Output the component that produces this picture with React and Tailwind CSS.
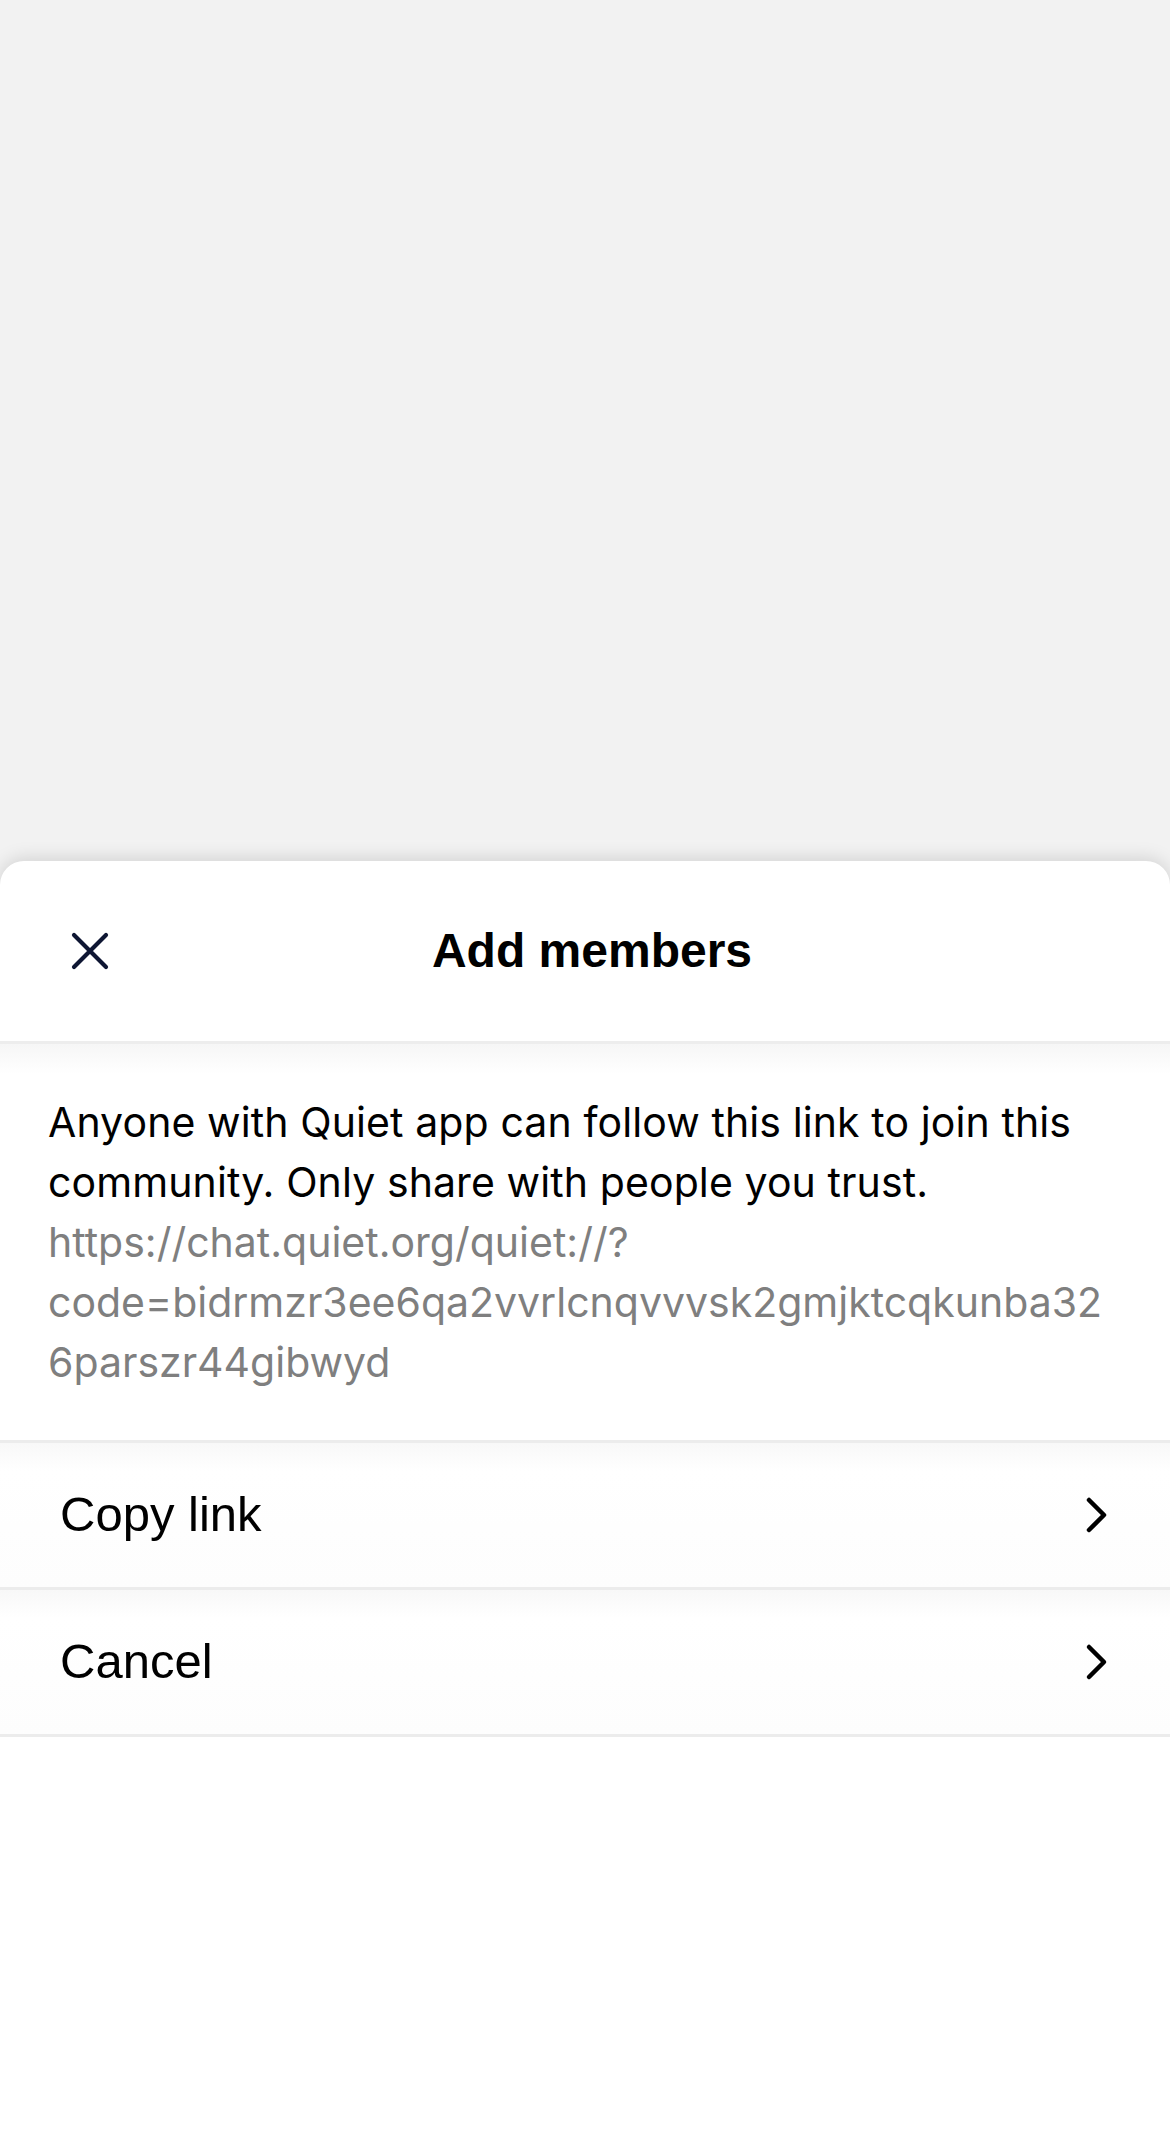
import React from "react";

function CloseIcon() {
  return (
    <svg width="40" height="40" viewBox="0 0 40 40" fill="none">
      <path d="M4 4 L36 36 M36 4 L4 36" stroke="#0e1633" strokeWidth="4.2" strokeLinecap="round" />
    </svg>
  );
}

function Chevron() {
  return (
    <svg width="28" height="40" viewBox="0 0 28 40" fill="none">
      <path d="M6 5 L21 20 L6 35" stroke="#000" strokeWidth="4.5" strokeLinecap="round" strokeLinejoin="round" />
    </svg>
  );
}

function Row({ label }) {
  return (
    <>
      <div className="h-[3px] bg-[#ececec]" />
      <div className="h-[144px] flex items-center justify-between pl-[60px] pr-[59px] bg-[linear-gradient(to_bottom,#f8f8f8,#ffffff_28px,#fdfdfd)]">
        <span className="text-[49px] text-black font-['Liberation_Sans',Arial,sans-serif]">{label}</span>
        <Chevron />
      </div>
    </>
  );
}

export default function App() {
  return (
    <div className="min-h-[2154px] bg-[#f2f2f2] flex flex-col overflow-hidden">
      <div className="h-[861px] shrink-0" />
      <div className="flex-1 bg-white rounded-t-[24px] shadow-[0_-3px_18px_rgba(0,0,0,0.13)] flex flex-col">
        <div className="h-[180px] grid grid-cols-[1fr_auto_1fr] items-center">
          <div className="pl-[70px] flex items-center">
            <CloseIcon />
          </div>
          <h1 className="text-[48px] font-bold text-black font-['Liberation_Sans',Arial,sans-serif] translate-x-[7px]">
            Add members
          </h1>
          <div />
        </div>
        <div className="h-[3px] bg-[#ededed]" />
        <div className="pl-[48px] pr-[36px] py-[48px] bg-[linear-gradient(to_bottom,#f6f6f6,#ffffff_30px)] font-['Inter','Noto_Sans',sans-serif] text-[41px] leading-[60px]">
          <p className="text-black tracking-[0.1px]">
            Anyone with Quiet app can follow this link to join this
            <br />
            community. Only share with people you trust.
          </p>
          <p className="text-[#7f7f7f]">
            https://chat.quiet.org/quiet://?
            <br />
            code=bidrmzr3ee6qa2vvrlcnqvvvsk2gmjktcqkunba32
            <br />
            6parszr44gibwyd
          </p>
        </div>
        <Row label="Copy link" />
        <Row label="Cancel" />
        <div className="h-[3px] bg-[#ececec]" />
        <div className="flex-1 bg-white" />
      </div>
    </div>
  );
}
